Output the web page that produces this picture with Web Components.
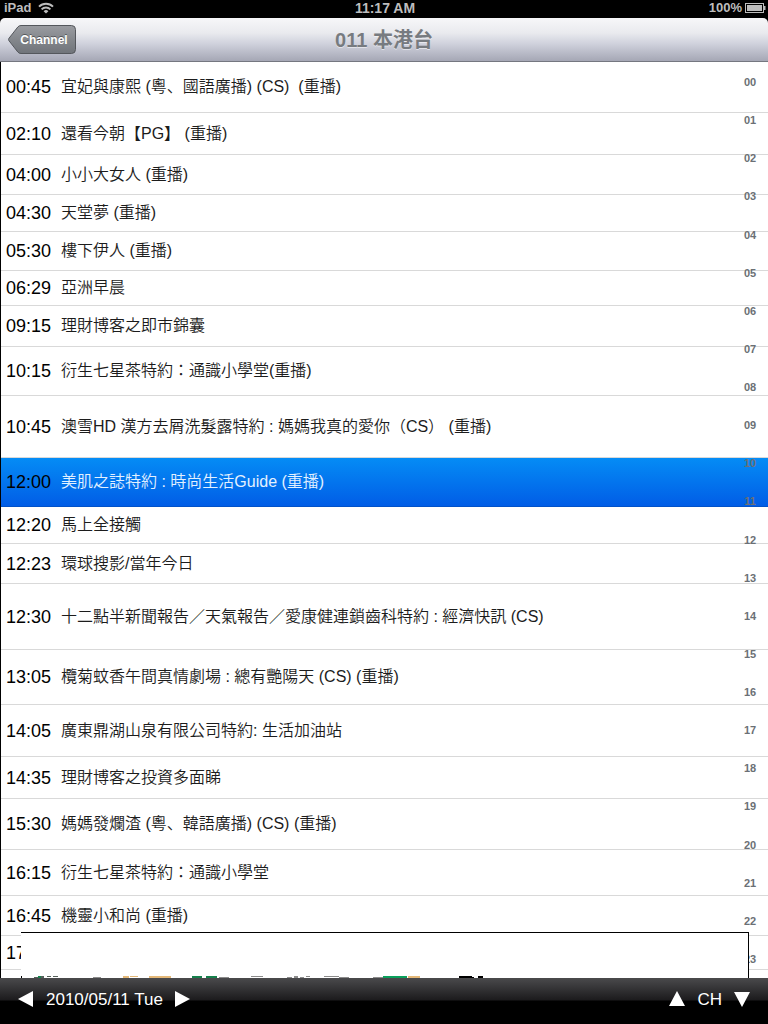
<!DOCTYPE html>
<html lang="zh-Hant">
<head>
<meta charset="UTF-8">
<meta name="viewport" content="width=device-width, initial-scale=1">
<title>011 本港台</title>
<style>
  body {
    margin: 0;
    background: #000;
    font-family: "Liberation Sans", "Noto Sans CJK JP", "Noto Sans CJK TC", sans-serif;
  }
</style>
</head>
<body>
<guide-app></guide-app>

<script>
class StatusBar extends HTMLElement {
  constructor() {
    super();
    this.attachShadow({ mode: "open" });
  }

  connectedCallback() {
    this.shadowRoot.innerHTML = `
      <style>
        :host {
          display: grid;
          grid-template-columns: 1fr auto 1fr;
          align-items: center;
          height: 18px;
          box-sizing: border-box;
          padding: 0 2px 2px 4px;
          background: #000;
          color: #bdbdbd;
          font-size: 13px;
          line-height: 16px;
          font-weight: bold;
        }
        .clock { font-size: 14px; }
        div {
          display: flex;
          align-items: center;
          gap: 7px;
        }
        .right {
          justify-content: flex-end;
          gap: 3px;
        }
        svg { display: block; }
      </style>
      <div>
        <span>iPad</span>
        <svg width="16" height="12" viewBox="0 0 16 12" fill="none" stroke="#bdbdbd" stroke-width="2">
          <path d="M1 4.6a10 10 0 0 1 14 0"/>
          <path d="M3.6 7.4a6.2 6.2 0 0 1 8.8 0"/>
          <path d="M8 11.6L5.6 9.2a3.4 3.4 0 0 1 4.8 0z" fill="#bdbdbd" stroke="none"/>
        </svg>
      </div>
      <span class="clock">11:17 AM</span>
      <div class="right">
        <span>100%</span>
        <svg width="21" height="10" viewBox="0 0 21 10">
          <rect x="0.5" y="0.5" width="18" height="9" fill="none" stroke="#bdbdbd"/>
          <rect x="2" y="2" width="15" height="6" fill="#bdbdbd"/>
          <path d="M19 3h1.5v4H19z" fill="#bdbdbd"/>
        </svg>
      </div>
    `;
  }
}

class NavBar extends HTMLElement {
  constructor() {
    super();
    this.attachShadow({ mode: "open" });
  }

  connectedCallback() {
    this.shadowRoot.innerHTML = `
      <style>
        :host {
          display: grid;
          grid-template-columns: 1fr auto 1fr;
          align-items: center;
          height: 44px;
          box-sizing: border-box;
          padding: 0 8px;
          border-bottom: 1px solid #757780;
          border-radius: 5px 5px 0 0;
          background: linear-gradient(#f7f7f9, #e9eaee 35%, #cfd1dc 60%, #a5a7b5);
        }
        h1 {
          margin: 0;
          color: #777b80;
          font-size: 20px;
          line-height: 24px;
          text-shadow: 0 1px 0 rgba(255,255,255,0.5);
        }
        button {
          position: relative;
          z-index: 0;
          justify-self: start;
          width: 68px;
          height: 29px;
          padding: 0 0 0 4px;
          border: none;
          background: none;
          color: #fff;
          font: bold 12px/16px "Liberation Sans", sans-serif;
          text-shadow: 0 -1px 0 rgba(0,0,0,0.4);
          cursor: pointer;
        }
        button svg {
          position: absolute;
          inset: 0;
          z-index: -1;
        }
      </style>
      <button type="button">
        <svg width="68" height="29" viewBox="0 0 68 29">
          <defs>
            <linearGradient id="face" x1="0" y1="0" x2="0" y2="1">
              <stop offset="0" stop-color="#9a9ca1"/>
              <stop offset="0.5" stop-color="#84878c"/>
              <stop offset="1" stop-color="#70747a"/>
            </linearGradient>
          </defs>
          <path d="M13 .5H63.5a4 4 0 0 1 4 4V24.5a4 4 0 0 1-4 4H13q-2 0-3.2-1.5L.8 15.5q-.8-1 0-2L9.8 2Q11 .5 13 .5z" fill="url(#face)" stroke="#54575c"/>
        </svg>
        <slot name="back"></slot>
      </button>
      <h1><slot></slot></h1>
    `;
  }
}

class ProgrammeRow extends HTMLElement {
  constructor() {
    super();
    this.attachShadow({ mode: "open" });
  }

  connectedCallback() {
    this.shadowRoot.innerHTML = `
      <style>
        :host {
          display: flex;
          align-items: center;
          gap: 10px;
          flex-shrink: 0;
          box-sizing: border-box;
          height: var(--row-height, 40px);
          padding: 0 32px 0 5px;
          border-bottom: 1px solid #d9d9d9;
          color: #000;
          white-space: nowrap;
        }
        :host([selected]) {
          border-bottom-color: #0252c8;
          background: linear-gradient(#058cf5, #015de6);
        }
        time {
          width: 45px;
          font-size: 18px;
          line-height: 22px;
        }
        span {
          color: #1c1c1c;
          font-size: 16px;
          line-height: 22px;
          font-weight: 350;
          white-space: pre;
        }
        :host([selected]) span { color: #e3f1ff; }
      </style>
      <time>${this.getAttribute("time")}</time>
      <span><slot></slot></span>
    `;
  }
}

class HourIndex extends HTMLElement {
  constructor() {
    super();
    this.attachShadow({ mode: "open" });
  }

  connectedCallback() {
    const hours = [];
    for (let i = 0; i < 24; i++) {
      const hour = String(i).padStart(2, "0");
      hours.push(`<a href="#h${hour}">${hour}</a>`);
    }
    this.shadowRoot.innerHTML = `
      <style>
        :host {
          display: flex;
          flex-direction: column;
          box-sizing: border-box;
          width: 36px;
          padding-top: 1px;
        }
        a {
          flex: 1;
          display: flex;
          align-items: center;
          justify-content: center;
          color: #6b7075;
          font-size: 11px;
          line-height: 12px;
          font-weight: bold;
          text-decoration: none;
        }
      </style>
      ${hours.join("")}
    `;
  }
}

class AdBanner extends HTMLElement {
  constructor() {
    super();
    this.attachShadow({ mode: "open" });
  }

  connectedCallback() {
    this.shadowRoot.innerHTML = `
      <style>
        :host {
          display: flex;
          align-items: flex-end;
          box-sizing: border-box;
          height: 46px;
          border-top: 1px solid #000;
          border-right: 1px solid #000;
          background: #fff;
          overflow: hidden;
        }
        svg { display: block; }
      </style>
      <svg width="480" height="2" viewBox="0 0 480 2" shape-rendering="crispEdges">
        <path d="M0 0h1v2H0z" fill="#000"/>
        <path d="M13 1h5v1h-5zM20 0h3v2h-3zM26 0h4v1h-4zM32 0h5v1h-5z" fill="#55605a"/>
        <path d="M17 0h3v2h-3zM171 0h10v2h-10zM185 0h11v2h-11z" fill="#16804c"/>
        <path d="M72 1h8v1h-8zM198 1h10v1h-10zM230 0h12v1h-12zM266 1h5v1h-5zM273 0h4v2h-4zM279 1h4v1h-4zM285 0h4v1h-4zM303 0h15v1h-15zM318 1h10v1h-10zM352 1h10v1h-10z" fill="#8b8b8b"/>
        <path d="M102 0h6v2h-6zM109 0h8v1h-8zM128 0h22v2h-22zM387 0h12v2h-12z" fill="#e4b878"/>
        <path d="M362 0h24v2h-24z" fill="#0aa05c"/>
        <path d="M438 0h13v1h-13zM438 1h15v1h-15zM457 0h5v2h-5z" fill="#000"/>
      </svg>
    `;
  }
}

class BottomBar extends HTMLElement {
  constructor() {
    super();
    this.attachShadow({ mode: "open" });
  }

  connectedCallback() {
    this.shadowRoot.innerHTML = `
      <style>
        :host {
          display: flex;
          align-items: center;
          justify-content: space-between;
          height: 46px;
          box-sizing: border-box;
          padding: 0 16px 2px;
          background: linear-gradient(#4a4a4c, #1c1b1d 22px, #000 23px);
          color: #fff;
          font-size: 17px;
          line-height: 20px;
        }
        div {
          display: flex;
          align-items: center;
          gap: 10px;
        }
        button {
          display: flex;
          align-items: center;
          justify-content: center;
          width: 20px;
          height: 20px;
          padding: 0 0 2px;
          border: none;
          background: none;
          cursor: pointer;
        }
        svg { fill: #fff; }
      </style>
      <div>
        <button type="button" aria-label="Previous day"><svg width="16" height="16"><path d="M15 0v16L0 8z"/></svg></button>
        <span><slot name="date"></slot></span>
        <button type="button" aria-label="Next day"><svg width="16" height="16"><path d="M0 0v16l15-8z"/></svg></button>
      </div>
      <div>
        <button type="button" aria-label="Channel up"><svg width="16" height="16"><path d="M0 15h16L8 0z"/></svg></button>
        <span><slot name="channel"></slot></span>
        <button type="button" aria-label="Channel down"><svg width="16" height="16"><path d="M0 1h16L8 16z"/></svg></button>
      </div>
    `;
  }
}

class GuideApp extends HTMLElement {
  constructor() {
    super();
    this.attachShadow({ mode: "open" });
    // [start, title, row height]
    this.programmes = [
      ["00:45", "宜妃與康熙 (粵、國語廣播) (CS)  (重播)", 51],
      ["02:10", "還看今朝【PG】 (重播)", 42],
      ["04:00", "小小大女人 (重播)", 40],
      ["04:30", "天堂夢 (重播)", 37],
      ["05:30", "樓下伊人 (重播)", 39],
      ["06:29", "亞洲早晨", 35],
      ["09:15", "理財博客之即市錦囊", 41],
      ["10:15", "衍生七星茶特約：通識小學堂(重播)", 49],
      ["10:45", "澳雪HD 漢方去屑洗髮露特約 : 媽媽我真的愛你（CS） (重播)", 62],
      ["12:00", "美肌之誌特約 : 時尚生活Guide (重播)", 49],
      ["12:20", "馬上全接觸", 37],
      ["12:23", "環球搜影/當年今日", 40],
      ["12:30", "十二點半新聞報告／天氣報告／愛康健連鎖齒科特約 : 經濟快訊 (CS)", 66],
      ["13:05", "欖菊蚊香午間真情劇場 : 總有艷陽天 (CS) (重播)", 55],
      ["14:05", "廣東鼎湖山泉有限公司特約: 生活加油站", 52],
      ["14:35", "理財博客之投資多面睇", 42],
      ["15:30", "媽媽發爛渣 (粵、韓語廣播) (CS) (重播)", 51],
      ["16:15", "衍生七星茶特約：通識小學堂", 46],
      ["16:45", "機靈小和尚 (重播)", 40],
      ["17:15", "", 34]
    ];
    this.current = "12:00";
  }

  connectedCallback() {
    // lang="ja" keeps the comma in the lower left corner of its box
    const rows = this.programmes.map(([time, title, height]) => `
      <programme-row lang="ja" time="${time}" style="--row-height: ${height}px"${time === this.current ? " selected" : ""}>${title}</programme-row>`);

    this.shadowRoot.innerHTML = `
      <style>
        :host {
          display: flex;
          flex-direction: column;
          height: 100vh;
        }
        main {
          position: relative;
          flex: 1;
          min-height: 0;
          overflow: hidden;
          display: flex;
          flex-direction: column;
          border-left: 1px solid #000;
          background: #fff;
        }
        hour-index {
          position: absolute;
          top: 0;
          right: 0;
          bottom: 0;
        }
        ad-banner {
          position: absolute;
          left: 20px;
          right: 19px;
          bottom: 0;
        }
      </style>
      <status-bar></status-bar>
      <nav-bar><span slot="back">Channel</span>011 本港台</nav-bar>
      <main>
        ${rows.join("")}
        <hour-index></hour-index>
        <ad-banner></ad-banner>
      </main>
      <bottom-bar>
        <span slot="date">2010/05/11 Tue</span>
        <span slot="channel">CH</span>
      </bottom-bar>
    `;
  }
}

customElements.define("status-bar", StatusBar);
customElements.define("nav-bar", NavBar);
customElements.define("programme-row", ProgrammeRow);
customElements.define("hour-index", HourIndex);
customElements.define("ad-banner", AdBanner);
customElements.define("bottom-bar", BottomBar);
customElements.define("guide-app", GuideApp);
</script>
</body>
</html>
